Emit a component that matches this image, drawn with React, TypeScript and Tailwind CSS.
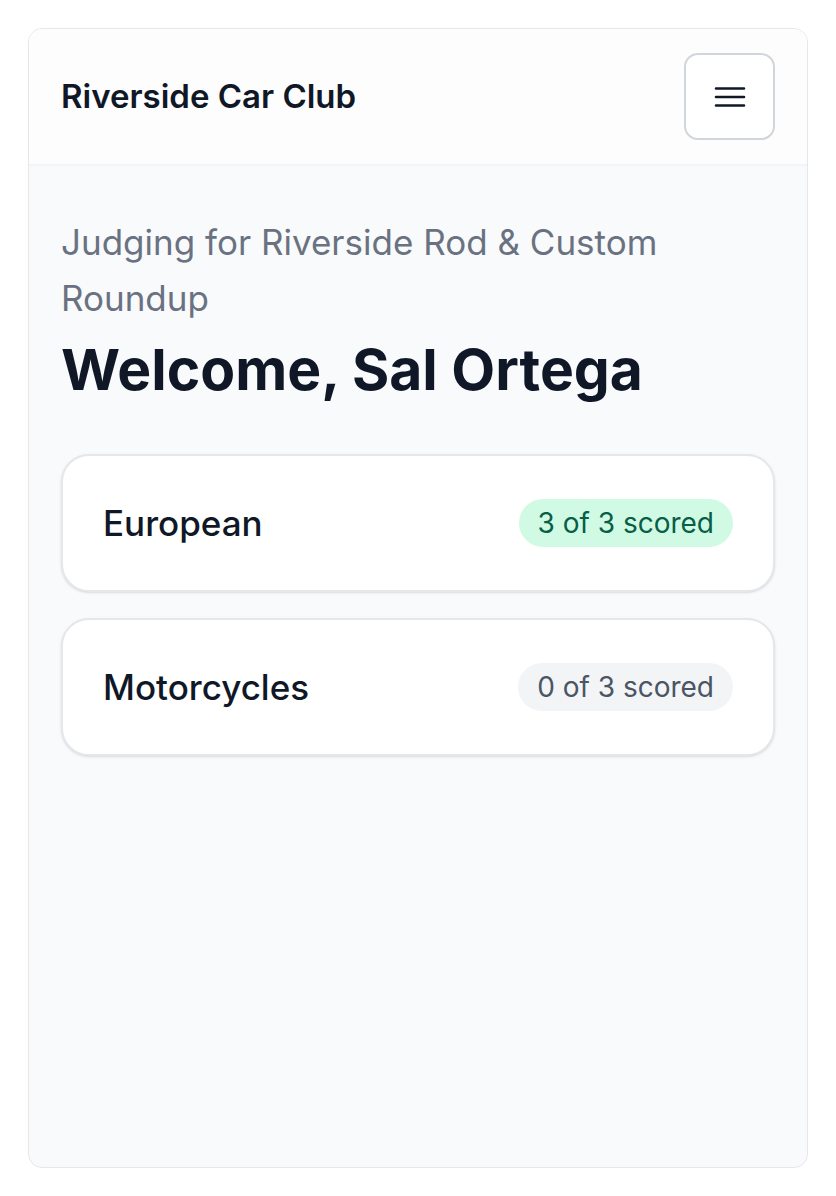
const categories = [
    { name: "European", scored: 3, total: 3 },
    { name: "Motorcycles", scored: 0, total: 3 },
];

const MenuIcon = () => (
    <svg width="32" height="32" viewBox="0 0 32 32" fill="none" stroke="currentColor" strokeWidth="2.6" strokeLinecap="round">
        <path d="M2 7.5h28M2 16h28M2 24.5h28" />
    </svg>
);

const App = () => {
    return (
        <div className="min-h-screen bg-white p-[28px]" style={{ fontFamily: "Inter, 'Noto Sans', sans-serif" }}>
            <div className="flex h-[1140px] flex-col overflow-hidden rounded-[14px] border border-gray-200 bg-gray-50">
                <header className="flex items-center justify-between border-b-2 border-gray-100 bg-[#fdfdfd] px-8 py-6">
                    <h1 className="text-[33px] font-semibold text-gray-900">Riverside Car Club</h1>
                    <button className="flex h-[87px] w-[91px] items-center justify-center rounded-[14px] border-2 border-gray-300 bg-white text-gray-900">
                        <MenuIcon />
                    </button>
                </header>

                <main className="flex-1 px-8 pt-[48px]">
                    <p className="max-w-[660px] text-[35px] leading-[56px] text-gray-500">
                        Judging for Riverside Rod &amp; Custom Roundup
                    </p>
                    <h2 className="mt-2 text-[57px] leading-[72px] font-bold text-gray-900">Welcome, Sal Ortega</h2>

                    <div className="mt-12 flex flex-col gap-[26px]">
                        {categories.map((c) => {
                            const done = c.scored === c.total;
                            return (
                                <div
                                    key={c.name}
                                    className="flex h-[138px] items-center justify-between rounded-[28px] border-2 border-gray-200 bg-white px-[40px] shadow-sm"
                                >
                                    <span className="text-[35px] font-medium text-gray-900">{c.name}</span>
                                    <span
                                        className={
                                            done
                                                ? "rounded-full bg-[#d1fae5] px-[19px] py-[6px] text-[28px] leading-[36px] text-[#065f46]"
                                                : "rounded-full bg-gray-100 px-[19px] py-[6px] text-[28px] leading-[36px] text-gray-600"
                                        }
                                    >
                                        {c.scored} of {c.total} scored
                                    </span>
                                </div>
                            );
                        })}
                    </div>
                </main>
            </div>
        </div>
    );
};

export default App;
